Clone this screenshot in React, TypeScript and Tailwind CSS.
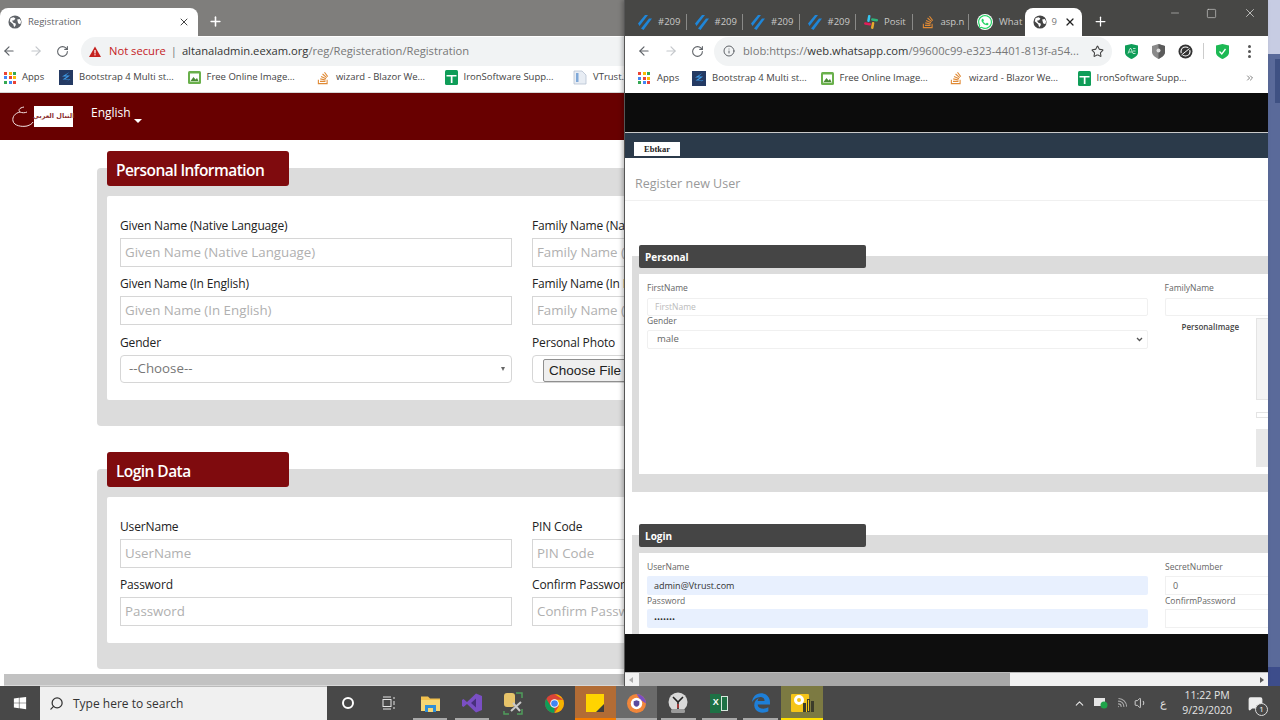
/**
 * Desktop with two overlapping Chrome windows and the Windows taskbar.
 */

import type { ReactNode } from "react";
import {
  ArrowLeft,
  ArrowRight,
  RotateCw,
  Star,
  Info,
  X,
  Plus,
  Minus,
  Square,
  Search,
  ChevronUp,
  ChevronsRight,
  Volume1,
  Wifi,
  MessageSquare,
} from "lucide-react";
import { FaWhatsapp, FaStackOverflow, FaWindows, FaEdgeLegacy } from "react-icons/fa";

function GlobeIcon({ color = "#5f6368" }: { color?: string }) {
  return (
    <svg width="14" height="14" viewBox="0 0 16 16">
      <circle cx="8" cy="8" r="7.5" fill={color} />
      <path
        d="M3 3.5 6.5 2.5l2 1.500-1.500 2-2.500.5L6.500 9l2 .5.5 2-2 2.500-1-3.500L2 7zM10.500 5l3-.5 1.500 3-1 3-2.500-1-.5-2.500z"
        fill="#fff"
      />
    </svg>
  );
}

function AppsIcon() {
  const colors = ["#ea4335", "#fbbc05", "#34a853", "#4285f4", "#ea4335", "#fbbc05", "#34a853", "#4285f4", "#ea4335"];
  return (
    <div className="grid grid-cols-3 gap-[1.5px] w-[12px] shrink-0">
      {colors.map((c, i) => (
        <span key={i} className="w-[3px] h-[3px]" style={{ background: c }} />
      ))}
    </div>
  );
}

function BoltIcon() {
  return (
    <svg width="14" height="15" viewBox="0 0 14 15" className="shrink-0">
      <rect width="14" height="15" fill="#243a63" />
      <path d="M10.5 2 3 6.5h5L3.5 9.500h7L6 13l5.500-4H6.500L11 5.500H6.500z" fill="#3f9be8" />
    </svg>
  );
}

function ImageBookmarkIcon() {
  return (
    <svg width="13" height="13" viewBox="0 0 13 13" className="shrink-0">
      <rect width="13" height="13" rx="1.5" fill="#6ab04c" />
      <rect x="2" y="2.5" width="9" height="8" fill="#fff" />
      <path d="M2.5 10 5.500 6l2 2.500 1.500-1.500 1.500 3z" fill="#4a8a35" />
    </svg>
  );
}

function PlusBookmarkIcon() {
  return (
    <svg width="13" height="15" viewBox="0 0 13 15" className="shrink-0">
      <rect width="13" height="15" rx="1.5" fill="#0f9d58" />
      <path d="M1.5 5h10v1.500h-4V13H5.800V6.500H1.500z" fill="#fff" />
    </svg>
  );
}

function DocIcon() {
  return (
    <svg width="14" height="15" viewBox="0 0 14 15" className="shrink-0">
      <path d="M1 1h8l4 4v9H1z" fill="#e8edf4" stroke="#b6c2d2" strokeWidth="0.8" />
      <rect x="3" y="3" width="2.5" height="9" fill="#7fa8d8" />
    </svg>
  );
}

function SlashIcon() {
  return (
    <svg width="14" height="16" viewBox="0 0 14 16" className="shrink-0">
      <path d="M0 9.5 7 1h3L1.500 12zM3 14.500 11 4.500h3L5.500 16z" fill="#1f86d8" />
    </svg>
  );
}

function SlackIcon() {
  return (
    <svg width="14" height="14" viewBox="0 0 14 14" className="shrink-0">
      <rect x="3.5" y="0" width="2.5" height="7" rx="1.2" fill="#36c5f0" transform="rotate(10 5 4)" />
      <rect x="7.5" y="7" width="2.5" height="7" rx="1.2" fill="#e8a92e" transform="rotate(10 9 10)" />
      <rect x="0" y="7.5" width="7" height="2.5" rx="1.2" fill="#e01e5a" transform="rotate(10 3 9)" />
      <rect x="7" y="3.5" width="7" height="2.5" rx="1.2" fill="#2eb67d" transform="rotate(10 10 5)" />
    </svg>
  );
}

function Bookmark({ icon, label }: { icon: ReactNode; label: string }) {
  return (
    <div className="w-[128.5px] shrink-0 flex items-center gap-[6px] whitespace-nowrap">
      {icon}
      <span className="text-[9.5px] text-[#444]">{label}</span>
    </div>
  );
}

function LeftWindow() {
  return (
    <div className="h-[686px] flex flex-col overflow-hidden bg-white">
      {/* Tab strip */}
      <div className="h-[36px] shrink-0 bg-[#7f7e7c] flex items-end">
        <div className="w-[198px] h-[28px] bg-white rounded-t-lg flex items-center pl-[8px] pr-[7px]">
          <GlobeIcon />
          <span className="ml-[6px] text-[9.5px] text-[#5f6368]">Registration</span>
          <X className="ml-auto mr-[1px] text-[#444]" size={12} />
        </div>
        <Plus className="ml-[10px] mb-[7px] text-white" size={15} strokeWidth={2.5} />
      </div>

      {/* Address bar */}
      <div className="h-[30px] shrink-0 flex items-center bg-white">
        <ArrowLeft className="ml-[2px] text-[#5f6368]" size={14} />
        <ArrowRight className="ml-[13px] text-[#c4c7cb]" size={14} />
        <RotateCw className="ml-[13px] text-[#5f6368]" size={13} />
        <div className="ml-[12px] flex-1 h-[29px] rounded-l-full bg-[#f1f3f4] flex items-center pl-[8px] text-[11.2px] whitespace-nowrap">
          <svg width="12" height="11" viewBox="0 0 12 11">
            <path d="M6 0.5 12 11H0z" fill="#c5221f" />
            <rect x="5.4" y="4" width="1.2" height="3.5" fill="#fff" />
            <rect x="5.4" y="8.2" width="1.2" height="1.2" fill="#fff" />
          </svg>
          <span className="ml-[8px] text-[#c5221f]">Not secure</span>
          <span className="mx-[5px] text-[#777]">|</span>
          <span className="text-[#333]">altanaladmin.eexam.org</span>
          <span className="text-[#777]">/reg/Registeration/Registration</span>
        </div>
      </div>

      {/* Bookmarks */}
      <div className="h-[27px] shrink-0 flex items-center pl-[4px] pb-[3px] bg-white border-b border-[#d5d5d5]">
        <div className="w-[55px] shrink-0 flex items-center gap-[6px]">
          <AppsIcon />
          <span className="text-[9.5px] text-[#444]">Apps</span>
        </div>
        <Bookmark icon={<BoltIcon />} label="Bootstrap 4 Multi st..." />
        <Bookmark icon={<ImageBookmarkIcon />} label="Free Online Image..." />
        <Bookmark icon={<FaStackOverflow className="text-[#e08a35] shrink-0" size={14} />} label="wizard - Blazor We..." />
        <Bookmark icon={<PlusBookmarkIcon />} label="IronSoftware Supp..." />
        <Bookmark icon={<DocIcon />} label="VTrust.Web" />
      </div>

      {/* Page header */}
      <div className="h-[47px] shrink-0 bg-[#680000] flex items-center pl-[11px] text-white">
        <svg width="23" height="24" viewBox="0 0 23 24" fill="none" stroke="#f3e3e3" strokeWidth="1">
          <path d="M13 2C8 3 7 5 9 7c-5 1-8 5-7 9 1 5 9 6 14 5 3-1 5-2 6-4" />
          <path d="M9 7c2 1 5 1 7 0" />
        </svg>
        <div className="w-[39px] h-[21px] bg-white flex items-center justify-center font-['DejaVu_Sans',sans-serif] text-[6.5px] font-bold text-[#8c2f2f] whitespace-nowrap">
          التنال العربي
        </div>
        <span className="ml-[18px] mb-[8px] text-[12px]">English</span>
        <span className="ml-[3px] mt-[9px] w-0 h-0 border-x-[4px] border-x-transparent border-t-[4px] border-t-white" />
      </div>

      {/* Page body, runs on under the window on top */}
      <div className="flex-1 min-h-0 w-[1280px] pl-[97px] pt-[11px]">
        <FormPanel
          title="Personal Information"
          cardHeight="h-[204px]"
          panelHeight="h-[258px]"
          rows={[
            [
              { label: "Given Name (Native Language)", placeholder: "Given Name (Native Language)" },
              { label: "Family Name (Native Language)", placeholder: "Family Name (Native Language)" },
            ],
            [
              { label: "Given Name (In English)", placeholder: "Given Name (In English)" },
              { label: "Family Name (In English)", placeholder: "Family Name (In English)" },
            ],
          ]}
          lastRow
        />
        <div className="h-[26px]" />
        <FormPanel
          title="Login Data"
          cardHeight="h-[146px]"
          panelHeight="h-[200px]"
          rows={[
            [
              { label: "UserName", placeholder: "UserName" },
              { label: "PIN Code", placeholder: "PIN Code" },
            ],
            [
              { label: "Password", placeholder: "Password" },
              { label: "Confirm Password", placeholder: "Confirm Password" },
            ],
          ]}
        />
      </div>

      {/* Horizontal scrollbar */}
      <div className="h-[12px] shrink-0 bg-[#c2c2c2] ml-[4px] border-b border-[#d8d8d8]" />
    </div>
  );
}

type Field = { label: string; placeholder: string };

function FormPanel({
  title,
  rows,
  cardHeight,
  panelHeight,
  lastRow,
}: {
  title: string;
  rows: Field[][];
  cardHeight: string;
  panelHeight: string;
  lastRow?: boolean;
}) {
  return (
    <div className="relative pt-[17px]">
      <div className="absolute left-[10px] top-0 w-[182px] h-[35px] bg-[#7f0b0e] rounded-[3px] flex items-center pl-[9px] pt-[4px] text-white text-[15.5px] font-semibold font-['Open_Sans',sans-serif] tracking-[-0.55px]">
        {title}
      </div>
      <div className={`${panelHeight} bg-[#dcdcdc] rounded-[4px] pl-[10px] pt-[28px]`}>
        <div className={`${cardHeight} bg-white rounded-[2px] pl-[13px] pt-[21px] font-['Open_Sans',sans-serif]`}>
          <div className="flex flex-col gap-[8px]">
            {rows.map((row, i) => (
              <div key={i} className="flex gap-[20px]">
                {row.map((f) => (
                  <div key={f.label} className="w-[392px] flex flex-col">
                    <span className="text-[12px] leading-[17px] tracking-[-0.15px] text-[#222] mb-[4px] whitespace-nowrap">{f.label}</span>
                    <input
                      readOnly
                      placeholder={f.placeholder}
                      className="h-[29px] w-full border border-[#d6d6d6] pl-[4px] pb-[2px] text-[13.3px] outline-none placeholder:text-[#b0b0b0]"
                    />
                  </div>
                ))}
              </div>
            ))}
            {lastRow && (
              <div className="flex gap-[20px] mt-[1px]">
                <div className="w-[392px] flex flex-col">
                  <span className="text-[12px] leading-[17px] tracking-[-0.15px] text-[#222] mb-[4px]">Gender</span>
                  <div className="h-[28px] border border-[#d6d6d6] rounded-[4px] flex items-center pl-[8px] pr-[6px] text-[13.3px] text-[#777]">
                    --Choose--
                    <span className="ml-auto w-0 h-0 border-x-[2.5px] border-x-transparent border-t-[4px] border-t-[#666]" />
                  </div>
                </div>
                <div className="w-[392px] flex flex-col">
                  <span className="text-[12px] leading-[17px] tracking-[-0.15px] text-[#222] mb-[4px]">Personal Photo</span>
                  <div className="h-[28px] border border-[#d6d6d6] rounded-[4px] flex items-center pl-[10px]">
                    <span className="h-[23px] mt-[2px] px-[5px] bg-[#efefef] border border-[#8f8f8f] rounded-[2px] text-[13.5px] leading-[21px] text-[#222] font-['Liberation_Sans',sans-serif]">
                      Choose File
                    </span>
                  </div>
                </div>
              </div>
            )}
          </div>
        </div>
      </div>
    </div>
  );
}

const rightTabs = [
  { icon: <SlashIcon />, label: "#209" },
  { icon: <SlashIcon />, label: "#209" },
  { icon: <SlashIcon />, label: "#209" },
  { icon: <SlashIcon />, label: "#209" },
  { icon: <SlackIcon />, label: "Posit" },
  { icon: <FaStackOverflow className="text-[#e08a35] shrink-0" size={14} />, label: "asp.n" },
  { icon: <FaWhatsapp className="text-[#25d366] bg-white rounded-full shrink-0" size={16} />, label: "What" },
];

function RightWindow() {
  return (
    <div className="absolute left-[624px] top-0 w-[644px] h-[686px] flex flex-col bg-white border-l border-[#555] overflow-hidden shadow-[-2px_0_4px_rgba(0,0,0,0.25)]">
      {/* Tab strip */}
      <div className="h-[36px] shrink-0 bg-[#474745] flex items-end relative">
        <div className="flex items-center h-[28px] ml-[5px]">
          {rightTabs.map((t, i) => (
            <div key={i} className="w-[56.5px] h-[16px] flex items-center pl-[8px] border-r border-[#8a8a88] last:border-r-0">
              {t.icon}
              <span className="ml-[6px] text-[9.5px] text-[#c9c9c7] whitespace-nowrap">{t.label}</span>
            </div>
          ))}
        </div>
        <div className="w-[57px] h-[28px] bg-white rounded-t-lg flex items-center pl-[8px] -ml-[1px]">
          <GlobeIcon color="#444" />
          <span className="ml-[5px] text-[9.5px] text-[#777]">9</span>
          <X className="ml-[7px] text-[#222]" size={12} strokeWidth={2.5} />
        </div>
        <Plus className="ml-[11px] mb-[7px] text-white" size={15} strokeWidth={2} />
        <div className="absolute right-0 top-0 flex items-center h-[26px] text-[#c9c9c7]">
          <Minus className="mr-[25px] text-[#9a9a98]" size={12} />
          <Square className="mr-[26px]" size={11} strokeWidth={1.5} />
          <X className="mr-[11px]" size={14} strokeWidth={1.5} />
        </div>
      </div>

      {/* Address bar */}
      <div className="h-[30px] shrink-0 flex items-center bg-white">
        <ArrowLeft className="ml-[12px] text-[#5f6368]" size={14} />
        <ArrowRight className="ml-[13px] text-[#c4c7cb]" size={14} />
        <RotateCw className="ml-[13px] text-[#5f6368]" size={13} />
        <div className="ml-[10px] w-[398px] h-[29px] rounded-full bg-[#f1f3f4] flex items-center pl-[9px] pr-[8px] text-[11.2px] whitespace-nowrap">
          <Info className="text-[#5f6368] shrink-0" size={12} />
          <span className="ml-[8px] text-[#777]">blob:https://</span>
          <span className="text-[#333]">web.whatsapp.com</span>
          <span className="text-[#777]">/99600c99-e323-4401-813f-a54...</span>
          <Star className="ml-auto text-[#444] shrink-0" size={13} />
        </div>
        <svg width="13" height="15" viewBox="0 0 13 15" className="ml-[13px]">
          <path d="M0 1.5 6.500 0 13 1.500v7c0 3-3 5-6.500 6.500C3 13.500 0 11.500 0 8.500z" fill="#0f9d58" />
          <path d="M3 9.500 5 4.500h1L8 9.500M4 8h3M8 4.500h2.500M8 7h2.500M8 9.500h2.500" stroke="#fff" strokeWidth="0.7" fill="none" />
        </svg>
        <svg width="13" height="15" viewBox="0 0 13 15" className="ml-[14px]">
          <path d="M0 2 6.500 0 13 2v6c0 3-3 5-6.500 7C3 13 0 11 0 8z" fill="#8a8a8a" />
          <path d="M6.5 0 13 2v6c0 3-3 5-6.500 7z" fill="#5b5b5b" />
          <circle cx="6.5" cy="6.5" r="2" fill="#ddd" />
        </svg>
        <svg width="15" height="15" viewBox="0 0 15 15" className="ml-[13px]">
          <circle cx="7.5" cy="7.5" r="7" fill="#333" />
          <circle cx="7.5" cy="7.5" r="4.5" fill="none" stroke="#fff" strokeWidth="1.2" />
          <path d="M3 11 12 4" stroke="#333" strokeWidth="2.5" />
          <path d="M3.5 11 11.500 4.500" stroke="#fff" strokeWidth="1" />
        </svg>
        <span className="ml-[10px] w-px h-[16px] bg-[#ccc]" />
        <svg width="13" height="15" viewBox="0 0 13 15" className="ml-[12px]">
          <path d="M0 1.5 6.500 0 13 1.500v7c0 3-3 5-6.500 6.500C3 13.500 0 11.500 0 8.500z" fill="#1db954" />
          <path d="M3.5 7.500 5.800 10 9.500 5" stroke="#fff" strokeWidth="1.3" fill="none" />
        </svg>
        <div className="ml-[19px] flex flex-col gap-[2px]">
          <span className="w-[3px] h-[3px] rounded-full bg-[#555]" />
          <span className="w-[3px] h-[3px] rounded-full bg-[#555]" />
          <span className="w-[3px] h-[3px] rounded-full bg-[#555]" />
        </div>
      </div>

      {/* Bookmarks */}
      <div className="h-[27px] shrink-0 flex items-center pl-[13px] pb-[3px] bg-white relative">
        <div className="w-[54px] shrink-0 flex items-center gap-[7px]">
          <AppsIcon />
          <span className="text-[9.5px] text-[#444]">Apps</span>
        </div>
        <Bookmark icon={<BoltIcon />} label="Bootstrap 4 Multi st..." />
        <Bookmark icon={<ImageBookmarkIcon />} label="Free Online Image..." />
        <Bookmark icon={<FaStackOverflow className="text-[#e08a35] shrink-0" size={14} />} label="wizard - Blazor We..." />
        <Bookmark icon={<PlusBookmarkIcon />} label="IronSoftware Supp..." />
        <ChevronsRight className="absolute right-[13px] top-[7px] text-[#666]" size={10} />
      </div>

      {/* Black bar above the shared picture */}
      <div className="h-[40px] shrink-0 bg-[#0c0c0c] border-b border-[#c9c9c9]" />

      {/* Shared screenshot page */}
      <div className="h-[25px] shrink-0 bg-[#2b3a4a] flex items-end pl-[9px] pb-[2px]">
        <div className="w-[46px] h-[14px] bg-white flex items-center justify-center text-[8.5px] font-bold font-['Liberation_Serif',serif] text-[#222]">
          Ebtkar
        </div>
      </div>

      <div className="h-[476px] shrink-0 overflow-hidden bg-white font-['Open_Sans',sans-serif]">
        <div className="h-[43px] pl-[10px] pt-[10px] flex items-center text-[12.5px] text-[#999] border-b border-[#f0f0f0]">
          Register new User
        </div>

        {/* Personal */}
        <div className="relative mt-[55px] ml-[7px] h-[236px] bg-[#dcdcdc] pl-[7px] pt-[18px]">
          <div className="absolute -top-[11px] left-[7px] w-[227px] h-[23px] bg-[#454545] rounded-[2px] flex items-center pl-[6px] pt-[2px] text-white text-[10px] font-bold">
            Personal
          </div>
          <div className="h-[200px] bg-white pl-[8px] pt-[8px] flex">
            <div className="w-[501px] flex flex-col">
              <span className="text-[8.5px] leading-[12px] text-[#666]">FirstName</span>
              <div className="mt-[4px] h-[18px] border border-[#f0f0f0] rounded-[2px] flex items-center pl-[7px] text-[8.5px] text-[#bbb]">
                FirstName
              </div>
              <span className="-mt-[1px] text-[8.5px] leading-[12px] text-[#666]">Gender</span>
              <div className="mt-[3px] h-[19px] border border-[#f0f0f0] rounded-[2px] flex items-center pl-[9px] pr-[4px] text-[9.5px] text-[#666]">
                male
                <svg width="7" height="5" viewBox="0 0 7 5" className="ml-auto">
                  <path d="M1 1l2.500 2.500L6 1" stroke="#555" strokeWidth="1.3" fill="none" />
                </svg>
              </div>
            </div>
            <div className="ml-[17px] flex-1 flex flex-col">
              <span className="text-[8.5px] leading-[12px] text-[#666]">FamilyName</span>
              <div className="mt-[4px] h-[18px] border border-[#f0f0f0] rounded-l-[2px] border-r-0" />
              <div className="flex mt-[2px]">
                <span className="ml-[17px] mt-[3px] text-[8px] font-semibold text-[#444] whitespace-nowrap">PersonalImage</span>
                <div className="ml-[17px] flex flex-col">
                  <div className="w-[12px] h-[82px] border border-[#e4e4e4] border-r-0 bg-[#f4f4f4]" />
                  <div className="mt-[12px] w-[12px] h-[6px] border border-[#e4e4e4] border-r-0" />
                  <div className="mt-[11px] w-[12px] h-[38px] bg-[#e8e8e8]" />
                </div>
              </div>
            </div>
          </div>
        </div>

        {/* Login */}
        <div className="relative mt-[43px] ml-[7px] h-[120px] bg-[#dcdcdc] pl-[7px] pt-[18px]">
          <div className="absolute -top-[11px] left-[7px] w-[227px] h-[23px] bg-[#454545] rounded-[2px] flex items-center pl-[6px] pt-[2px] text-white text-[10px] font-bold">
            Login
          </div>
          <div className="h-[100px] bg-white pl-[8px] pt-[8px] flex">
            <div className="w-[501px] flex flex-col">
              <span className="text-[8.5px] leading-[12px] text-[#666]">UserName</span>
              <div className="mt-[3px] h-[19px] bg-[#e8f0fe] rounded-[2px] flex items-center pl-[7px] text-[9px] text-[#333]">
                admin@Vtrust.com
              </div>
              <span className="text-[8.5px] leading-[12px] text-[#666]">Password</span>
              <div className="mt-[2px] h-[19px] bg-[#e8f0fe] rounded-[2px] flex items-center pl-[7px] text-[8px] leading-none text-[#333]">
                •••••••
              </div>
            </div>
            <div className="ml-[17px] flex-1 flex flex-col">
              <span className="text-[8.5px] leading-[12px] text-[#666]">SecretNumber</span>
              <div className="mt-[3px] h-[19px] border border-[#f0f0f0] border-r-0 flex items-center pl-[7px] text-[9px] text-[#666]">
                0
              </div>
              <span className="text-[8.5px] leading-[12px] text-[#666]">ConfirmPassword</span>
              <div className="mt-[2px] h-[19px] border border-[#f0f0f0] border-r-0" />
            </div>
          </div>
        </div>
      </div>

      <div className="h-[39px] shrink-0 bg-[#0e0e0e] border-b border-[#bbb]" />

      {/* Horizontal scrollbar */}
      <div className="flex-1 bg-[#f1f1f1] flex items-center relative">
        <span className="ml-[4px] w-0 h-0 border-y-[3px] border-y-transparent border-r-[4px] border-r-[#aaa]" />
        <div className="absolute left-[14px] top-0 bottom-0 w-[371px] bg-[#a8a8a8]" />
        <span className="ml-auto mr-[4px] w-0 h-0 border-y-[3px] border-y-transparent border-l-[4px] border-l-[#555]" />
      </div>
    </div>
  );
}

function Wallpaper() {
  return (
    <div className="absolute left-[1268px] top-0 w-[12px] h-[686px] flex flex-col">
      <div className="h-[54px] bg-[#c7cce3]" />
      <div className="flex-1 bg-[#5a6a9a] relative">
        <div className="absolute right-0 top-[5px] w-[5px] h-[44px] bg-[#3f5183]" />
      </div>
      <div className="h-[19px] bg-[#3d4d8b]" />
    </div>
  );
}

function TaskSlot({ children, bg, under }: { children: ReactNode; bg?: string; under?: string }) {
  return (
    <div className={`relative w-[41.3px] h-full flex items-center justify-center shrink-0 ${bg ?? ""}`}>
      {children}
      {under && <span className={`absolute bottom-0 h-[2px] ${under}`} />}
    </div>
  );
}

function Taskbar() {
  return (
    <div className="h-[34px] bg-[#484848] flex items-center relative">
      <div className="w-[40px] h-full flex items-center justify-center text-white">
        <FaWindows size={14} />
      </div>
      <div className="w-[287px] h-full bg-[#f0f0f0] flex items-center pl-[9px] text-[12px] text-[#333] border-t border-[#bbb]">
        <Search className="-scale-x-100 text-[#333]" size={15} />
        <span className="ml-[9px]">Type here to search</span>
      </div>

      <TaskSlot>
        <span className="w-[12px] h-[12px] rounded-full border-2 border-white" />
      </TaskSlot>
      <TaskSlot>
        <svg width="14" height="14" viewBox="0 0 14 14" fill="none" stroke="#e5e5e5" strokeWidth="1">
          <rect x="1" y="3.5" width="8" height="7" />
          <path d="M1 1h8M1 13h8M12 1v2M12 5v4M12 11v2" />
        </svg>
      </TaskSlot>
      <TaskSlot under="w-[34px] bg-[#a9a9a9]">
        <svg width="19" height="17" viewBox="0 0 19 17">
          <path d="M0 1.5h7l2 2h10V16H0z" fill="#f2c14e" />
          <rect y="5" width="19" height="11" fill="#f7d774" />
          <rect x="4" y="10" width="11" height="7" fill="#2f8fd8" />
          <rect x="7" y="13" width="5" height="4" fill="#f7d774" />
        </svg>
      </TaskSlot>
      <TaskSlot under="w-[34px] bg-[#a9a9a9]">
        <svg width="20" height="20" viewBox="0 0 20 20">
          <path d="M14 0.5 20 3v14l-6 2.500L5 11l-3.500 3L0 13V7l1.500-1L5 9z" fill="#7a4fc4" />
          <path d="M14 5.5 9 10l5 4.500z" fill="#48307d" />
        </svg>
      </TaskSlot>
      <TaskSlot>
        <svg width="22" height="24" viewBox="0 0 22 24">
          <rect x="2" y="2" width="11" height="14" rx="3" fill="#e8c46a" />
          <path d="M14 2h6v5M2 20v3h5M15 23h5v-5" stroke="#4f9d5b" strokeWidth="1.5" fill="none" />
          <path d="M9 20 19 11M11 12l7 8" stroke="#c9c9c9" strokeWidth="2" />
        </svg>
      </TaskSlot>
      <TaskSlot>
        <svg width="19" height="19" viewBox="0 0 20 20">
          <circle cx="10" cy="10" r="10" fill="#db4437" />
          <path d="M10 20a10 10 0 0 1-8.660-15L6 13l4 1z" fill="#0f9d58" />
          <path d="M10 0a10 10 0 0 1 10 10 10 10 0 0 1-10 10l4.500-7L10 6h9.200z" fill="#f4b400" />
          <circle cx="10" cy="10" r="4.5" fill="#fff" />
          <circle cx="10" cy="10" r="3.5" fill="#4285f4" />
        </svg>
      </TaskSlot>
      <TaskSlot bg="bg-[#b26c35]" under="left-0 right-0 bg-[#f57c00]">
        <svg width="18" height="18" viewBox="0 0 18 18">
          <rect width="18" height="18" fill="#ffd400" />
          <path d="M18 10v8h-8z" fill="#3c3c3c" />
        </svg>
      </TaskSlot>
      <TaskSlot bg="bg-[#6a6a6a]" under="left-0 right-0 bg-[#a9a9a9]">
        <svg width="19" height="19" viewBox="0 0 20 20">
          <circle cx="10" cy="10" r="10" fill="#f0863a" />
          <path d="M10 0a10 10 0 0 1 10 10l-6-4z" fill="#7a4fc4" />
          <circle cx="10" cy="10" r="6" fill="#fff" />
          <path d="M10 6.5l3 1v3c0 1.500-1.500 2.500-3 3-1.500-.5-3-1.500-3-3v-3z" fill="#5b4a9e" />
        </svg>
      </TaskSlot>
      <TaskSlot under="w-[35px] bg-[#a9a9a9]">
        <svg width="20" height="22" viewBox="0 0 20 22">
          <circle cx="10" cy="10" r="9.5" fill="#d9d9d9" />
          <rect x="3" y="17" width="14" height="4" rx="1.5" fill="#9a9a9a" />
          <path d="M5 5l5 5 5-5M10 10v7" stroke="#222" strokeWidth="1.6" fill="none" />
          <path d="M10 12v4" stroke="#d33" strokeWidth="1.2" />
        </svg>
      </TaskSlot>
      <TaskSlot under="w-[35px] bg-[#a9a9a9]">
        <div className="flex items-center">
          <span className="w-[11px] h-[19px] bg-[#1e7145] flex items-center justify-center text-white text-[9px] font-bold font-['Liberation_Sans',sans-serif]">
            X
          </span>
          <span className="w-[7px] h-[15px] border border-[#d8e8de] bg-[#1e7145]" />
        </div>
      </TaskSlot>
      <TaskSlot under="w-[35px] bg-[#a9a9a9]">
        <FaEdgeLegacy className="text-[#1e7fd8]" size={20} />
      </TaskSlot>
      <TaskSlot bg="bg-[#7c7a42]" under="left-0 right-0 bg-[#ffe000]">
        <div className="relative w-[18px] h-[18px] bg-[#f5c518] rounded-[1px] mr-[3px]">
          <span className="absolute left-[3px] top-[1px] w-[10px] h-[10px] rounded-full border-[3px] border-white" />
          <div className="absolute -right-[5px] bottom-0 flex items-end gap-[1px]">
            <span className="w-[3px] h-[9px] bg-[#3c3c2a]" />
            <span className="w-[3px] h-[13px] border border-[#3c3c2a]" />
            <span className="w-[3px] h-[11px] bg-[#3c3c2a]" />
          </div>
        </div>
      </TaskSlot>

      {/* System tray */}
      <div className="ml-auto flex items-center h-full text-[#e5e5e5]">
        <ChevronUp size={13} />
        <svg width="14" height="12" viewBox="0 0 14 12" className="ml-[8px]">
          <rect y="1" width="11" height="8" fill="#e5e5e5" />
          <circle cx="10" cy="8" r="3.5" fill="#1fa34a" />
        </svg>
        <Wifi className="ml-[7px] text-[#aaa] rotate-45" size={13} />
        <Volume1 className="ml-[6px]" size={14} strokeWidth={1.5} />
        <span className="ml-[12px] text-[11px]">ع</span>
        <div className="ml-[15px] flex flex-col items-center text-[10.5px] leading-[15px] font-['Open_Sans',sans-serif]">
          <span>11:22 PM</span>
          <span>9/29/2020</span>
        </div>
        <div className="relative ml-[16px] mr-[17px]">
          <MessageSquare className="fill-[#eee] text-[#eee]" size={15} />
          <span className="absolute -right-[5px] -bottom-[5px] w-[13px] h-[13px] rounded-full border border-[#ddd] bg-[#484848] flex items-center justify-center text-[8px] text-white">
            1
          </span>
        </div>
      </div>
    </div>
  );
}

export default function App() {
  return (
    <div className="relative w-[1280px] h-[720px] overflow-hidden font-['Open_Sans','Liberation_Sans',sans-serif]">
      <LeftWindow />
      <Wallpaper />
      <RightWindow />
      <Taskbar />
    </div>
  );
}
